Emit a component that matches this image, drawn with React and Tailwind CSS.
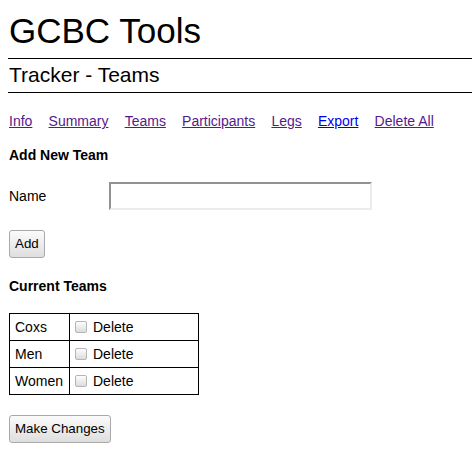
import React, { useState } from "react";

const links = [
  { label: "Info", visited: true },
  { label: "Summary", visited: true },
  { label: "Teams", visited: true },
  { label: "Participants", visited: true },
  { label: "Legs", visited: true },
  { label: "Export", visited: false },
  { label: "Delete All", visited: true },
];

const teams = ["Coxs", "Men", "Women"];

function Checkbox() {
  const [on, setOn] = useState(false);
  return (
    <input
      type="checkbox"
      checked={on}
      onChange={() => setOn(!on)}
      className="appearance-none w-[12px] h-[12px] mr-[6px] rounded-[2px] border border-[#b5b5b5] bg-gradient-to-b from-[#fdfdfd] to-[#dcdcdc] shrink-0"
    />
  );
}

function Button({ children }) {
  return (
    <button className="h-[28px] px-[5px] text-[13.33px] leading-[16px] text-black border border-[#a9a9a9] rounded-[3px] bg-gradient-to-b from-[#fbfbfb] to-[#dedede]">
      {children}
    </button>
  );
}

export default function App() {
  return (
    <div className="font-['Liberation_Sans',Arial,sans-serif] text-[14px] leading-[16px] text-black bg-white min-h-[458px] pl-[9px] pt-[11px]">
      {/* HEADER */}
      <h1 className="text-[35px] leading-[40px] h-[40px]">GCBC Tools</h1>
      <div className="mt-[7px] h-px bg-black -ml-[1px]" />
      <h2 className="mt-[4px] text-[21px] leading-[24px] h-[24px]">Tracker - Teams</h2>
      <div className="mt-[5px] h-px bg-black -ml-[1px]" />

      {/* NAV */}
      <nav className="mt-[20px] flex gap-[16.2px]">
        {links.map((l) => (
          <a
            key={l.label}
            href="#"
            className={`underline ${l.visited ? "text-[#551a8b]" : "text-[#0000ee]"}`}
          >
            {l.label}
          </a>
        ))}
      </nav>

      {/* ADD TEAM */}
      <h3 className="mt-[18px] font-bold">Add New Team</h3>
      <div className="mt-[19px] flex items-center">
        <label className="w-[100px]">Name</label>
        <input
          type="text"
          className="w-[263px] h-[28px] border-2 border-t-[#929292] border-l-[#929292] border-b-[#ececec] border-r-[#ececec] px-1 outline-none"
        />
      </div>
      <div className="mt-[20px]">
        <Button>Add</Button>
      </div>

      {/* CURRENT TEAMS */}
      <h3 className="mt-[20px] font-bold">Current Teams</h3>
      <table className="mt-[19px] border-collapse table-fixed w-[189px]">
        <colgroup>
          <col className="w-[60px]" />
          <col className="w-[129px]" />
        </colgroup>
        <tbody>
          {teams.map((t) => (
            <tr key={t}>
              <td className="border border-black px-[5px] py-[5px] h-[27px]">{t}</td>
              <td className="border border-black px-[5px] py-[5px] h-[27px]">
                <span className="flex items-center">
                  <Checkbox />
                  Delete
                </span>
              </td>
            </tr>
          ))}
        </tbody>
      </table>
      <div className="mt-[20px]">
        <Button>Make Changes</Button>
      </div>
    </div>
  );
}
